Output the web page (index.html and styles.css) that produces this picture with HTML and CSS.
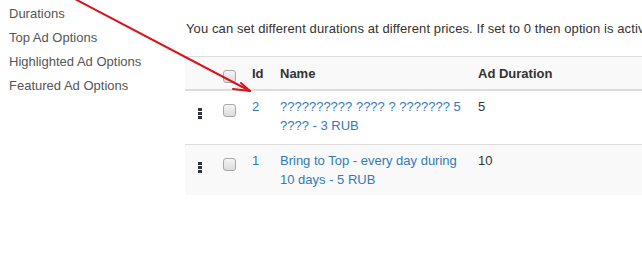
FILE: index.html
```html
<!doctype html>
<html lang="en">

<head>
  <meta charset="UTF-8" />
  <title>Ad Options</title>
  <link rel="stylesheet" href="styles.css">
</head>

<body>
  <div class="page">
    <ul class="menu">
      <li>Durations</li>
      <li>Top Ad Options</li>
      <li>Highlighted Ad Options</li>
      <li>Featured Ad Options</li>
    </ul>

    <div class="content">
      <p class="hint">You can set different durations at different prices. If set to 0 then option is active forever.</p>
      <table>
        <thead>
          <tr>
            <th class="col-drag"></th>
            <th class="col-check"><span class="check"></span></th>
            <th class="col-id">Id</th>
            <th class="col-name">Name</th>
            <th>Ad Duration</th>
          </tr>
        </thead>
        <tbody>
          <tr>
            <td class="col-drag"><span class="handle"><i></i><i></i><i></i></span></td>
            <td class="col-check"><span class="check"></span></td>
            <td class="col-id"><a href="#">2</a></td>
            <td class="col-name"><a href="#">?????????? ???? ? ??????? 5 ???? - 3 RUB</a></td>
            <td>5</td>
          </tr>
          <tr class="odd">
            <td class="col-drag"><span class="handle"><i></i><i></i><i></i></span></td>
            <td class="col-check"><span class="check"></span></td>
            <td class="col-id"><a href="#">1</a></td>
            <td class="col-name"><a href="#">Bring to Top - every day during 10 days - 5 RUB</a></td>
            <td>10</td>
          </tr>
        </tbody>
      </table>
    </div>
  </div>

  <!-- annotation arrow drawn over the screenshot -->
  <svg class="arrow" width="642" height="270" viewBox="0 0 642 270">
    <path d="M73 -2 L250 91" />
    <path d="M233 89 L250 91 L241 83" />
  </svg>
</body>

</html>
```

FILE: styles.css
```css
body {
  margin: 0;
  font-family: "Liberation Sans", Arial, sans-serif;
  font-size: 13px;
  line-height: 1.42857;
  color: #333;
  background-color: #fff;
  overflow: hidden;
}

.page {
  display: flex;
  width: 760px;
}

.menu {
  list-style: none;
  margin: 0;
  padding: 2px 0 0 9px;
  width: 176px;
  flex-shrink: 0;
}

.menu li {
  line-height: 24px;
  color: #555;
}

.content {
  flex: 1;
}

.hint {
  margin: 20px 0 17px 1px;
  white-space: nowrap;
  letter-spacing: 0.1px;
}

table {
  border-collapse: collapse;
  width: 100%;
  text-align: left;
}

th,
td {
  vertical-align: top;
  padding: 7px 8px 9px;
}

th {
  padding: 8px 8px 6px;
  font-weight: bold;
  background-color: #f9f9f9;
  border-top: 1px solid #ddd;
  border-bottom: 2px solid #ddd;
}

tbody tr {
  border-bottom: 1px solid #ddd;
}

tbody tr:last-child {
  border-bottom: none;
}

tbody tr:last-child td {
  padding-bottom: 6px;
}

tr.odd td {
  background-color: #f9f9f9;
}

a {
  color: #337ab7;
  text-decoration: none;
}

.col-drag {
  width: 14px;
  text-align: center;
}

.col-check {
  width: 13px;
}

.col-id {
  width: 12px;
}

.col-name {
  width: 182px;
}

.handle {
  display: inline-flex;
  flex-direction: column;
  gap: 1px;
  margin-top: 3px;
}

.handle i {
  display: block;
  width: 4px;
  height: 3px;
  background-color: #2f3340;
}

.check {
  display: block;
  width: 11px;
  height: 11px;
  border: 1px solid #a9a9a9;
  border-radius: 3px;
  background: linear-gradient(#f4f4f4, #dcdcdc);
  margin-top: 6px;
}

th .check {
  margin-top: 5px;
}

.arrow {
  position: absolute;
  left: 0;
  top: 0;
  pointer-events: none;
}

.arrow path {
  fill: none;
  stroke: #d8141c;
  stroke-width: 2;
  stroke-linecap: round;
  stroke-linejoin: round;
}
```
